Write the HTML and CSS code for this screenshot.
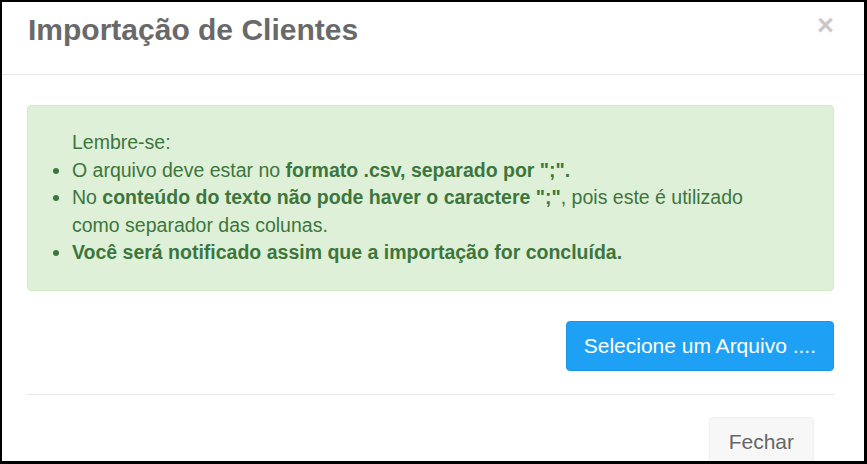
FILE: index.html
```html
<!DOCTYPE html>
<html lang="pt-BR">
<head>
    <meta charset="UTF-8">
    <title>Importação de Clientes</title>
    <link rel="stylesheet" href="styles.css">
</head>
<body>
    <div class="modal">
        <div class="modal-header">
            <h1>Importação de Clientes</h1>
            <button type="button" class="close" aria-label="Fechar">&times;</button>
        </div>
        <div class="modal-body">
            <div class="alert">
                <p class="alert-title">Lembre-se:</p>
                <ul>
                    <li>O arquivo deve estar no <b>formato .csv, separado por ";".</b></li>
                    <li>No <b>conteúdo do texto não pode haver o caractere ";"</b>, pois este é utilizado<br>como separador das colunas.</li>
                    <li><b>Você será notificado assim que a importação for concluída.</b></li>
                </ul>
            </div>
            <div class="upload-row">
                <button type="button" class="btn-upload">Selecione um Arquivo ....</button>
            </div>
        </div>
        <div class="modal-footer">
            <button type="button" class="btn-close">Fechar</button>
        </div>
    </div>
</body>
</html>
```

FILE: styles.css
```css
body {
    margin: 0;
    font-family: 'Liberation Sans', Arial, sans-serif;
    background: #fff;
}
.modal {
    width: 867px;
    height: 464px;
    box-sizing: border-box;
    border: solid #000;
    border-width: 2px 3px 3px 2px;
    overflow: hidden;
    background: #fff;
}
.modal-header {
    height: 73px;
    box-sizing: border-box;
    padding: 11px 30px 0 26px;
    border-bottom: 1px solid #e5e5e5;
    display: flex;
    justify-content: space-between;
    align-items: flex-start;
}
h1 {
    margin: 0;
    font-size: 30px;
    line-height: 34px;
    font-weight: 700;
    color: #696969;
}
.close {
    background: none;
    border: none;
    padding: 0;
    margin-top: -5px;
    font-family: inherit;
    font-size: 29px;
    line-height: 34px;
    font-weight: 700;
    color: #c9c9c9;
    cursor: pointer;
}
.modal-body {
    padding: 30px 30px 0 25px;
}
.alert {
    height: 186px;
    box-sizing: border-box;
    padding: 23px 15px 0 15px;
    background: #dff0d8;
    border: 1px solid #d6e9c6;
    border-radius: 4px;
    color: #3c763d;
    font-size: 19.5px;
    line-height: 27.5px;
}
.alert-title {
    margin: 0;
    padding-left: 29px;
}
.alert ul {
    margin: 0;
    padding-left: 29px;
}
.upload-row {
    display: flex;
    justify-content: flex-end;
    padding: 30px 0 23px;
    border-bottom: 1px solid #e5e5e5;
}
.btn-upload {
    height: 50px;
    padding: 0 17px;
    background: #1ea1f5;
    border: 1px solid #1b94e4;
    border-radius: 4px;
    color: #fff;
    font-family: inherit;
    font-size: 21px;
    cursor: pointer;
}
.modal-footer {
    display: flex;
    justify-content: flex-end;
    padding: 22px 50px 0 0;
}
.btn-close {
    height: 50px;
    padding: 0 19px;
    background: #f7f7f7;
    border: 1px solid #f0f0f0;
    border-radius: 4px;
    color: #666;
    font-family: inherit;
    font-size: 21px;
    cursor: pointer;
}
```
